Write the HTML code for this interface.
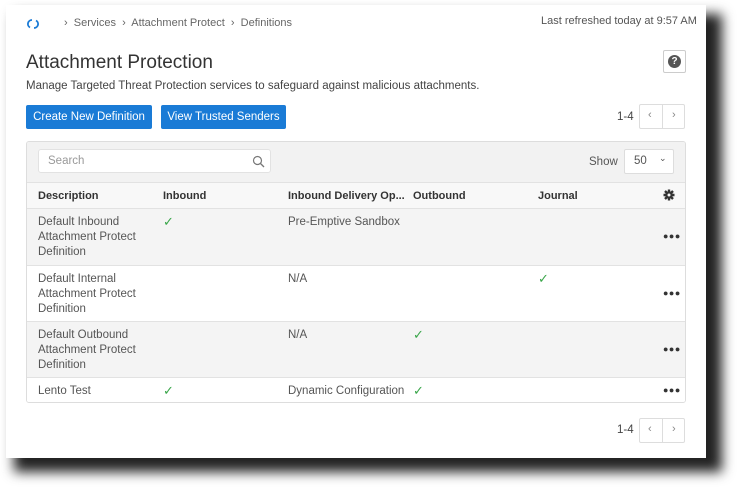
<!DOCTYPE html>
<html><head><style>
*{box-sizing:border-box;margin:0;padding:0}
body{width:738px;height:491px;background:#fff;font-family:"Liberation Sans",sans-serif;color:#444;position:relative;overflow:hidden}
.shadow{position:absolute;left:14px;top:14px;width:708px;height:458px;background:#222;filter:blur(6px)}
.panel{position:absolute;left:6px;top:5px;width:700px;height:453px;background:#fff}
.a{position:absolute;white-space:nowrap}
.bc{font-size:11px;color:#666}
.btn{position:absolute;top:105px;height:24px;background:#1a7bd6;color:#fff;font-size:11.5px;line-height:24px;text-align:center;border-radius:2px}
.pg{position:absolute;width:46px;height:25px;border:1px solid #ddd;border-radius:2px;background:#fff}
.pg span{position:absolute;top:4px;font-size:11px;color:#888}
.pg i{position:absolute;left:22px;top:0;height:23px;border-left:1px solid #ddd}
.tbl{position:absolute;left:26px;top:141px;width:660px;height:262px;border:1px solid #ddd;border-radius:3px;overflow:hidden;font-size:11.5px;color:#555}
.row{position:absolute;left:0;width:660px;border-top:1px solid #e2e2e2}
.c{position:absolute;line-height:15px}
.ck{color:#3aa64a;font-size:13px}
.dots{position:absolute;left:636px;font-size:9px;font-weight:bold;color:#333;letter-spacing:0.5px}
</style></head><body>
<div class="shadow"></div>
<div class="panel"></div>
<svg class="a" style="left:27px;top:18px" width="12" height="12" viewBox="0 0 12 12"><path d="M5 2A4 4 0 0 0 3 9.5M7 10A4 4 0 0 0 9 2.5" stroke="#1a7bd6" stroke-width="1.8" fill="none"/></svg>
<div class="a bc" style="left:64px;top:17px">›&nbsp; Services&nbsp; ›&nbsp; Attachment Protect&nbsp; ›&nbsp; Definitions</div>
<div class="a bc" style="left:541px;top:15px;color:#555">Last refreshed today at 9:57 AM</div>
<div class="a" style="left:26px;top:52px;font-size:19px;color:#333">Attachment Protection</div>
<div class="a" style="left:26px;top:80px;font-size:11.5px;color:#444">Manage Targeted Threat Protection services to safeguard against malicious attachments.</div>
<div class="a" style="left:663px;top:50px;width:23px;height:23px;border:1px solid #ccc;border-radius:2px"><div style="position:absolute;left:4px;top:4px;width:13px;height:13px;border-radius:50%;background:#555;color:#fff;font-size:10px;font-weight:bold;text-align:center;line-height:13px">?</div></div>
<div class="btn" style="left:26px;width:126px">Create New Definition</div>
<div class="btn" style="left:161px;width:125px">View Trusted Senders</div>
<div class="a" style="left:617px;top:111px;font-size:11.5px;color:#444">1-4</div>
<div class="pg" style="left:639px;top:104px"><span style="left:8px">‹</span><i></i><span style="left:32px">›</span></div>
<div class="tbl">
 <div style="position:absolute;left:0;top:0;width:660px;height:40px;background:#f2f2f2"></div>
 <div style="position:absolute;left:11px;top:7px;width:233px;height:24px;background:#fff;border:1px solid #e2e2e2;border-radius:3px"><span style="position:absolute;left:9px;top:5px;color:#999">Search</span>
 <svg style="position:absolute;right:5px;top:5px" width="13" height="13" viewBox="0 0 13 13"><circle cx="5.5" cy="5.5" r="4" stroke="#777" stroke-width="1.2" fill="none"/><path d="M8.5 8.5L12 12" stroke="#777" stroke-width="1.3"/></svg></div>
 <div class="c" style="left:562px;top:13px">Show</div>
 <div style="position:absolute;left:597px;top:7px;width:50px;height:25px;background:#fff;border:1px solid #ddd;border-radius:2px"><span style="position:absolute;left:9px;top:5px">50</span><span style="position:absolute;left:34px;top:3px;font-size:9px">⌄</span></div>
 <div class="row" style="top:40px;height:26px;background:#f8f8f8;font-weight:bold;color:#333;font-size:11px">
  <div class="c" style="left:11px;top:6px">Description</div><div class="c" style="left:136px;top:6px">Inbound</div><div class="c" style="left:261px;top:6px">Inbound Delivery Op...</div><div class="c" style="left:386px;top:6px">Outbound</div><div class="c" style="left:511px;top:6px">Journal</div>
  <svg style="position:absolute;left:636px;top:6px" width="12" height="12" viewBox="0 0 12 12"><g stroke="#333" stroke-width="2.4"><path d="M6 0.5V11.5M0.5 6H11.5M2 2L10 10M10 2L2 10"/></g><circle cx="6" cy="6" r="3.8" fill="#333"/><circle cx="6" cy="6" r="1.5" fill="#f8f8f8"/></svg>
 </div>
 <div class="row" style="top:66px;height:57px;background:#f4f4f4"><div class="c" style="left:11px;top:6px">Default Inbound<br>Attachment Protect<br>Definition</div><div class="c ck" style="left:136px;top:5px">✓</div><div class="c" style="left:261px;top:6px">Pre-Emptive Sandbox</div><div class="dots" style="top:22px">●●●</div></div>
 <div class="row" style="top:123px;height:56px;background:#fff"><div class="c" style="left:11px;top:6px">Default Internal<br>Attachment Protect<br>Definition</div><div class="c" style="left:261px;top:6px">N/A</div><div class="c ck" style="left:511px;top:5px">✓</div><div class="dots" style="top:22px">●●●</div></div>
 <div class="row" style="top:179px;height:56px;background:#f4f4f4"><div class="c" style="left:11px;top:6px">Default Outbound<br>Attachment Protect<br>Definition</div><div class="c" style="left:261px;top:6px">N/A</div><div class="c ck" style="left:386px;top:5px">✓</div><div class="dots" style="top:22px">●●●</div></div>
 <div class="row" style="top:235px;height:27px;background:#fff"><div class="c" style="left:11px;top:6px">Lento Test</div><div class="c ck" style="left:136px;top:5px">✓</div><div class="c" style="left:261px;top:6px">Dynamic Configuration</div><div class="c ck" style="left:386px;top:5px">✓</div><div class="dots" style="top:7px">●●●</div></div>
</div>
<div class="a" style="left:617px;top:424px;font-size:11.5px;color:#444">1-4</div>
<div class="pg" style="left:639px;top:418px"><span style="left:8px">‹</span><i></i><span style="left:32px">›</span></div>
</body></html>
